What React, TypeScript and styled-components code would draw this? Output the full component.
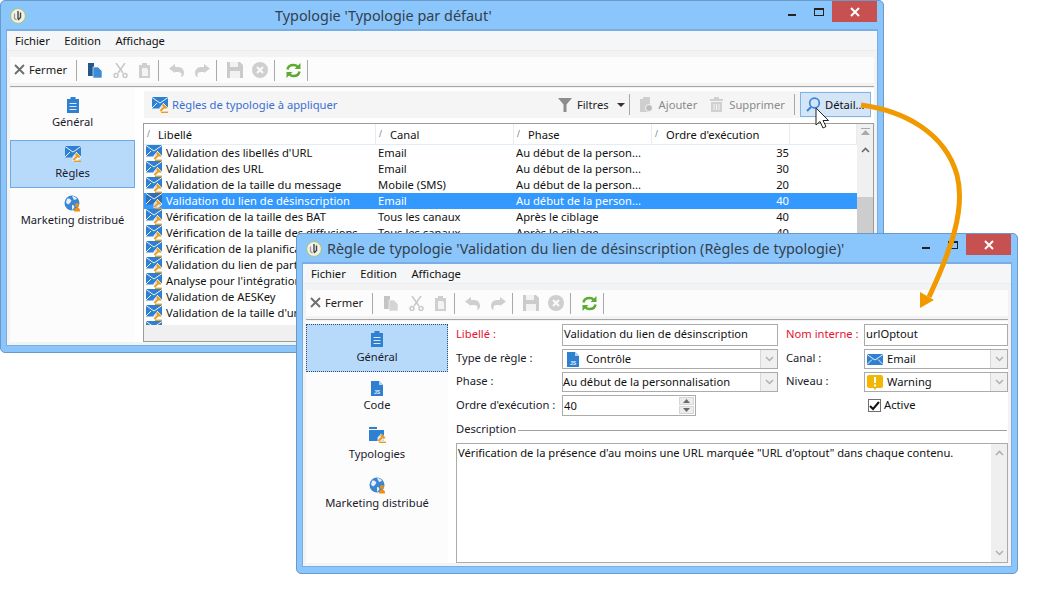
import React from "react";
import styled, { createGlobalStyle } from "styled-components";

const GlobalStyle = createGlobalStyle`
  html, body {
    margin: 0;
    padding: 0;
    background: #fff;
  }
`;

const Desktop = styled.div`
  position: relative;
  width: 1063px;
  height: 591px;
  overflow: hidden;
  background: #fff;
  font-family: "Noto Sans", "Open Sans", sans-serif;
  font-size: 11.2px;
  color: #111;
`;

const Win = styled.div<{ $x: number; $y: number; $w: number; $h: number }>`
  position: absolute;
  left: ${(p) => p.$x}px;
  top: ${(p) => p.$y}px;
  width: ${(p) => p.$w}px;
  height: ${(p) => p.$h}px;
  box-sizing: border-box;
  display: flex;
  flex-direction: column;
  padding: 0 6px 7px 6px;
  background: #8ac5fb;
  border: 1px solid #6b9ac8;
  border-radius: 5px;
`;

const TitleBar = styled.div<{ $left: number }>`
  position: relative;
  flex: 0 0 29px;
  display: flex;
  align-items: center;
  box-sizing: border-box;
  padding-left: ${(p) => p.$left}px;
  font-size: 14.4px;
  color: #333f4c;
  white-space: nowrap;
`;

const AppBadge = styled.div`
  position: absolute;
  left: 3px;
  top: 7px;
  width: 16px;
  height: 16px;
`;

const Controls = styled.div`
  position: absolute;
  right: 0;
  top: 0;
  display: flex;
  align-items: flex-start;
`;

const CtrlBtn = styled.div<{ $pt?: number }>`
  width: 27px;
  height: 21px;
  box-sizing: border-box;
  padding-top: ${(p) => p.$pt ?? 0}px;
  display: flex;
  align-items: center;
  justify-content: center;
`;

const CloseBtn = styled(CtrlBtn)`
  width: 45px;
  background: #c75050;
`;

const Client = styled.div`
  flex: 1;
  min-height: 0;
  display: flex;
  flex-direction: column;
  background: #f3f3f3;
  border-top: 1px solid #7aaee2;
  box-shadow: 0 0 0 1px #7aaee2;
`;

const MenuBar = styled.div`
  flex: 0 0 19px;
  display: flex;
  align-items: center;
  gap: 14.5px;
  padding-left: 8px;
  background: #f5f6f7;
  border-bottom: 1px solid #ececec;
`;

const ToolBar = styled.div`
  flex: 0 0 26px;
  margin: 6px 3px 0;
  display: flex;
  align-items: center;
  background: #fcfcfc;
  line-height: 15px;
`;

const CloseTool = styled.div`
  box-sizing: border-box;
  width: 66px;
  display: flex;
  align-items: center;
  gap: 4px;
  padding-left: 4px;
  padding-bottom: 1px;
  color: #222;
`;

const ToolSep = styled.div`
  width: 1px;
  height: 21px;
  background: #a8a8a8;
`;

const ToolGroup = styled.div<{ $gap?: number; $pl?: number; $pr?: number }>`
  display: flex;
  align-items: center;
  gap: ${(p) => p.$gap ?? 9}px;
  padding: 0 ${(p) => p.$pr ?? 6}px 0 ${(p) => p.$pl ?? 10}px;
`;

const Rule = styled.div`
  flex: 0 0 1px;
  margin: 3px 3px 0;
  background: #a6a6a6;
`;

const Body = styled.div`
  flex: 1;
  min-height: 0;
  display: flex;
  margin: 1px 3px 3px;
  background: #fff;
`;

const Side = styled.div<{ $w: number; $pt: number }>`
  flex: 0 0 ${(p) => p.$w}px;
  box-sizing: border-box;
  background: #fcfcfc;
  padding-top: ${(p) => p.$pt}px;
  display: flex;
  flex-direction: column;
`;

const SideItem = styled.div<{ $sel?: boolean; $dotted?: boolean; $h: number; $pt: number; $gap?: number }>`
  flex: 0 0 ${(p) => p.$h}px;
  box-sizing: border-box;
  display: flex;
  flex-direction: column;
  align-items: center;
  padding-top: ${(p) => p.$pt}px;
  gap: ${(p) => p.$gap ?? 0}px;
  line-height: 16px;
  white-space: nowrap;
  color: #1a1a2a;
  ${(p) => p.$sel && "background: #b8dafa;"}
  ${(p) => p.$sel && (p.$dotted ? "border: 1px dotted #2a4f7a;" : "border: 1px solid #6eaae6;")}
`;

const SideIcon = styled.div`
  height: 18px;
  display: flex;
  align-items: center;
`;

const Main = styled.div`
  flex: 1;
  min-width: 0;
  display: flex;
  flex-direction: column;
  padding: 3px 2px 0 8px;
`;

const Header = styled.div`
  flex: 0 0 27px;
  margin: 0 1px 5px 1px;
  display: flex;
  align-items: center;
  background: #f5f5f5;
  padding-left: 8px;
`;

const HeaderTitle = styled.div`
  display: flex;
  align-items: center;
  gap: 4px;
  color: #3a6fd0;
`;

const HeaderActions = styled.div`
  margin-left: auto;
  display: flex;
  align-items: center;
  height: 100%;
`;

const ActionBtn = styled.div<{ $off?: boolean; $pl?: number; $pr: number; $gap?: number }>`
  display: flex;
  align-items: center;
  gap: ${(p) => p.$gap ?? 6}px;
  padding: 0 ${(p) => p.$pr}px 0 ${(p) => p.$pl ?? 0}px;
  color: ${(p) => (p.$off ? "#8a8a8a" : "#222")};
`;

const CaretSlot = styled.span`
  margin-left: 3px;
  display: flex;
`;

const DetailBtn = styled.div`
  box-sizing: border-box;
  height: 25px;
  width: 71px;
  margin-left: 5px;
  display: flex;
  align-items: center;
  gap: 4px;
  padding-left: 5px;
  background: #d3e5f7;
  border: 1px solid #7eb4ea;
`;

const HeadSep = styled.div`
  width: 1px;
  height: 21px;
  background: #a8a8a8;
`;

const Table = styled.div`
  flex: 1;
  min-height: 0;
  display: flex;
  flex-direction: column;
  margin-right: -2px;
  border: 1px solid #9c9c9c;
  background: #f0f0f0;
  overflow: hidden;
`;

const ListArea = styled.div`
  height: 201px;
  display: flex;
  background: #fff;
`;

const ListCols = styled.div`
  width: 713px;
  overflow: hidden;
`;

const HeadRow = styled.div`
  display: grid;
  grid-template-columns: 232px 138px 138px 138px 67px;
  height: 21px;
  border-bottom: 1px solid #e3edf8;
  box-sizing: border-box;
`;

const HeadCell = styled.div`
  display: flex;
  align-items: center;
  gap: 6px;
  padding-left: 3px;
  border-right: 1px solid #e3edf8;
`;

const SortMark = styled.span`
  width: 5px;
  font-size: 8px;
  color: #777;
  line-height: 1;
`;

const Row = styled.div<{ $sel?: boolean }>`
  display: grid;
  grid-template-columns: 232px 138px 138px 138px 67px;
  height: 16px;
  align-items: center;
  white-space: nowrap;
  line-height: 15px;
  color: ${(p) => (p.$sel ? "#fff" : "#111")};
  background: ${(p) => (p.$sel ? "#3399ff" : "transparent")};
`;

const LabelCell = styled.div`
  display: flex;
  align-items: center;
  gap: 4px;
  padding-left: 2px;
  overflow: hidden;
`;

const LabelText = styled.span`
  padding-bottom: 1px;
`;

const TextCell = styled.div`
  padding: 0 0 1px 2px;
  overflow: hidden;
`;

const NumCell = styled.div`
  text-align: right;
  padding: 0 1px 1px 0;
`;

const VScroll = styled.div`
  flex: 0 0 16px;
  display: flex;
  flex-direction: column;
  align-items: center;
  background: #f0f0f0;
  padding-top: 4px;
  gap: 12px;
`;

const Thumb = styled.div`
  width: 16px;
  height: 50px;
  margin-top: 32px;
  background: #cdcdcd;
`;

const Form = styled.div`
  flex: 1;
  min-width: 0;
  display: flex;
  flex-direction: column;
  padding: 3px 0 0 8px;
  background: #fff;
`;

const FieldGrid = styled.div`
  display: grid;
  grid-template-columns: 106px 216px 8px 78px 144px;
  grid-template-rows: 22px 20px 20px 21px;
  row-gap: 3px;
  align-items: center;
`;

const Label = styled.div<{ $req?: boolean }>`
  color: ${(p) => (p.$req ? "#e8112d" : "#1a1a2a")};
  white-space: nowrap;
  line-height: 14px;
  padding-bottom: 2px;
`;

const Field = styled.div`
  box-sizing: border-box;
  height: 100%;
  display: flex;
  align-items: center;
  padding: 0 0 2px 1px;
  background: #fff;
  border: 1px solid #ababab;
  white-space: nowrap;
  overflow: hidden;
  line-height: 14px;
`;

const SelectBox = styled(Field)<{ $pl?: number; $gap?: number }>`
  padding: 0 0 0 ${(p) => p.$pl ?? 2}px;
  gap: ${(p) => p.$gap ?? 4}px;
`;

const Chevron = styled.div`
  margin-left: auto;
  flex: 0 0 16px;
  height: 100%;
  display: flex;
  align-items: center;
  justify-content: center;
  background: #f0f0f0;
  border-left: 1px solid #d8d8d8;
`;

const SpinField = styled(Field)`
  width: 134px;
  padding: 0 0 0 1px;
`;

const Spin = styled.div`
  margin-left: auto;
  width: 16px;
  height: 100%;
  display: flex;
  flex-direction: column;
  padding: 1px 1px 1px 0;
  box-sizing: border-box;
  gap: 1px;
`;

const SpinPart = styled.div`
  flex: 1;
  display: flex;
  align-items: center;
  justify-content: center;
  background: #ececec;
  border: 1px solid #d6d6d6;
`;

const CheckRow = styled.div`
  display: flex;
  align-items: center;
  gap: 3px;
  padding-left: 4px;
`;

const CheckText = styled.span`
  line-height: 14px;
  padding-bottom: 2px;
`;

const CheckBox = styled.div`
  box-sizing: border-box;
  width: 13px;
  height: 13px;
  display: flex;
  align-items: center;
  justify-content: center;
  border: 1px solid #6f6f6f;
  background: #fff;
`;

const LegendRow = styled.div`
  display: flex;
  align-items: center;
  gap: 2px;
  margin-top: 6px;
  height: 16px;
  color: #1a1a2a;
`;

const LegendText = styled.span`
  line-height: 14px;
  padding-bottom: 2px;
`;

const LegendLine = styled.div`
  flex: 1;
  height: 1px;
  margin-right: 1px;
  background: #a0a0a0;
`;

const DescBox = styled.div`
  position: relative;
  flex: 1;
  margin-top: 5px;
  box-sizing: border-box;
  padding: 1px 1px;
  border: 1px solid #ababab;
  background: #fff;
`;

const DescScroll = styled.div`
  position: absolute;
  right: 0;
  top: 0;
  bottom: 0;
  width: 16px;
  background: #efefef;
  display: flex;
  flex-direction: column;
  align-items: center;
  justify-content: space-between;
  padding: 6px 0;
  box-sizing: border-box;
`;

const Overlay = styled.svg`
  position: absolute;
  left: 0;
  top: 0;
  pointer-events: none;
`;

// --- icons ---

const Logo = () => (
  <svg width="16" height="16" viewBox="0 0 16 16">
    <circle cx="8" cy="8" r="7.400" fill="#f1f1ea" stroke="#a3c56c" />
    <path d="M4.500 5.500v5l2 1.500" fill="none" stroke="#9a9a9a" strokeWidth="1.300" />
    <path d="M8 3v8M10.500 4.500v5L8 12" fill="none" stroke="#444" strokeWidth="1.400" />
  </svg>
);

const MinIcon = () => (
  <svg width="8" height="2" viewBox="0 0 8 2"><rect width="8" height="2" fill="#222" /></svg>
);

const MaxIcon = () => (
  <svg width="10" height="8" viewBox="0 0 10 8">
    <rect x="0.500" y="1" width="9" height="6.500" fill="none" stroke="#222" />
    <rect width="10" height="2" fill="#222" />
  </svg>
);

const XWhite = () => (
  <svg width="10" height="10" viewBox="0 0 10 10">
    <path d="M1 1l8 8M9 1l-8 8" stroke="#fff" strokeWidth="2" />
  </svg>
);

const Cross = () => (
  <svg width="11" height="11" viewBox="0 0 11 11">
    <path d="M1 1l9 9M10 1L1 10" stroke="#6e6e6e" strokeWidth="1.900" />
  </svg>
);

const CopyIcon = ({ on }: { on?: boolean }) => (
  <svg width="15" height="15" viewBox="0 0 15 15">
    <path d="M0 0h6v13H0z" fill={on ? "#23568f" : "#c4c4c4"} />
    <path d="M5 4h5l4 4v7H5z" fill={on ? "#3d8ad6" : "#d4d4d4"} stroke="#fcfcfc" strokeWidth=".6" />
  </svg>
);

const CutIcon = () => (
  <svg width="15" height="15" viewBox="0 0 15 15" fill="none" stroke="#c8c8c8" strokeWidth="1.500">
    <path d="M3 0l7 10M12 0L5 10" />
    <circle cx="3" cy="12.500" r="2" />
    <circle cx="12" cy="12.500" r="2" />
  </svg>
);

const PasteIcon = () => (
  <svg width="13" height="15" viewBox="0 0 13 15">
    <path d="M1 2h3V0h5v2h3v13H1z" fill="#cfcfcf" />
    <path d="M4 5h5l1 2v6H4z" fill="#f4f4f4" />
  </svg>
);

const UndoIcon = ({ flip }: { flip?: boolean }) => (
  <svg width="16" height="13" viewBox="0 0 16 13" style={flip ? { transform: "scaleX(-1)" } : undefined}>
    <path d="M0 4.500L6 0v3h3c4 0 6 3 6 6s-2 4-3 4c1-2 1-5-3-5H6v1z" fill="#cfcfcf" />
  </svg>
);

const SaveIcon = () => (
  <svg width="16" height="16" viewBox="0 0 16 16">
    <path d="M0 0h13l3 3v13H0z" fill="#cbcbcb" />
    <path d="M3 0h8v5H3z" fill="#f2f2f2" />
    <path d="M3 9h10v7H3z" fill="#f2f2f2" />
  </svg>
);

const CancelIcon = () => (
  <svg width="16" height="16" viewBox="0 0 16 16">
    <circle cx="8" cy="8" r="8" fill="#cfcfcf" />
    <path d="M5 5l6 6M11 5l-6 6" stroke="#fbfbfb" strokeWidth="2" />
  </svg>
);

const RefreshIcon = () => (
  <svg width="15" height="15" viewBox="0 0 15 15" fill="none">
    <path d="M1.500 6.500C2 3.500 4.500 2 7.500 2c1.800 0 3.200.7 4.200 1.800" stroke="#5aab2e" strokeWidth="2.400" />
    <path d="M14.500 0v6h-6z" fill="#5aab2e" />
    <path d="M13.500 8.500C13 11.500 10.500 13 7.500 13c-1.800 0-3.200-.7-4.200-1.800" stroke="#5aab2e" strokeWidth="2.400" />
    <path d="M.5 15V9h6z" fill="#5aab2e" />
  </svg>
);

const ClipboardIcon = () => (
  <svg width="12" height="16" viewBox="0 0 12 16">
    <path d="M0 2h3.500V0h5v2H12v14H0z" fill="#2f80d0" />
    <path d="M2.500 6.500h7M2.500 9.500h7M2.500 12.500h7" stroke="#d8e9fa" />
  </svg>
);

const Gavel = ({ x, y }: { x: number; y: number }) => (
  <g transform={`translate(${x} ${y})`}>
    <path d="M3.500-1L9 3.500 5 7.500H0V3z" fill="#fff" opacity=".8" />
    <path d="M4-.5L8 3 6.500 4.500l-4-3.500z" fill="#ee9a1c" />
    <path d="M5 2.500L.8 6.500" stroke="#ee9a1c" strokeWidth="1.800" fill="none" />
    <path d="M1.500 7.800h7" stroke="#ee9a1c" strokeWidth="1.400" />
  </g>
);

const MailRule = ({ dark }: { dark?: boolean }) => (
  <svg width="16" height="16" viewBox="0 0 16 16">
    <rect width="16" height="11.500" fill={dark ? "#2d6fbb" : "#2f80d0"} />
    <path d="M0 .5l8 5.500 8-5.500M0 11l5-5M16 11l-5-5" stroke="#e8f2fb" strokeWidth="1" fill="none" />
    <Gavel x={7.500} y={7.500} />
  </svg>
);

const MailIcon = () => (
  <svg width="16" height="11" viewBox="0 0 16 11">
    <rect width="16" height="11" fill="#2f80d0" />
    <path d="M0 .5l8 5.500 8-5.500M0 10.500l5-5M16 10.500l-5-5" stroke="#e8f2fb" fill="none" />
  </svg>
);

const GlobeIcon = () => (
  <svg width="17" height="17" viewBox="0 0 17 17">
    <circle cx="8" cy="8" r="7.500" fill="#3b86d2" />
    <path d="M3 4c2-1 3 0 4 1S6 8 5 9 2 8 2 7zM8 1c2 0 4 1 5 3l-3 1zM8 10c2 0 3 1 2 3l-2 2z" fill="#e6f0fa" />
    <circle cx="13" cy="10" r="2" fill="#ee8f12" />
    <path d="M10 15.500c0-2 1.500-3 3-3s3 1 3 3v1h-6z" fill="#ee8f12" />
  </svg>
);

const JsFile = () => (
  <svg width="12" height="15" viewBox="0 0 12 15">
    <path d="M0 0h8l4 4v11H0z" fill="#2f80d0" />
    <path d="M8 0l4 4H8z" fill="#b8d6f2" />
    <text x="3" y="12.500" fontSize="5" fontWeight="700" fill="#e8f2fb" fontFamily="Liberation Sans">JS</text>
  </svg>
);

const FolderRule = () => (
  <svg width="17" height="16" viewBox="0 0 17 16">
    <path d="M0 0h8v2H0z" fill="#2f80d0" />
    <path d="M0 3h15v11H0z" fill="#2f80d0" />
    <Gavel x={8.500} y={7.500} />
  </svg>
);

const FunnelIcon = () => (
  <svg width="14" height="14" viewBox="0 0 14 14">
    <path d="M0 0h14L8.500 6.500V14h-3V6.500z" fill="#8c8c8c" />
  </svg>
);

const Caret = () => (
  <svg width="8" height="4" viewBox="0 0 8 4"><path d="M0 0h8L4 4z" fill="#333" /></svg>
);

const AddDoc = () => (
  <svg width="13" height="15" viewBox="0 0 13 15">
    <path d="M0 2h3V0h7v15H0z" fill="#cfcfcf" />
    <circle cx="9" cy="11" r="3.500" fill="#bdbdbd" stroke="#f5f5f5" />
  </svg>
);

const TrashIcon = () => (
  <svg width="13" height="15" viewBox="0 0 13 15">
    <path d="M0 2h4V0h5v2h4v2H0zM1 5h11v10H1z" fill="#d0d0d0" />
    <path d="M4 7v6M6.500 7v6M9 7v6" stroke="#f5f5f5" />
  </svg>
);

const LoupeIcon = () => (
  <svg width="15" height="15" viewBox="0 0 15 15" fill="none">
    <circle cx="8.500" cy="6" r="4.800" stroke="#3a86d6" strokeWidth="1.700" />
    <path d="M5 10l-4 4" stroke="#3a86d6" strokeWidth="2.200" />
  </svg>
);

const ChevDown = () => (
  <svg width="9" height="6" viewBox="0 0 9 6" fill="none"><path d="M1 1l3.500 3.500L8 1" stroke="#b0b0b0" strokeWidth="1.500" /></svg>
);

const ChevUp = ({ color = "#6b6b6b" }: { color?: string }) => (
  <svg width="9" height="6" viewBox="0 0 9 6" fill="none"><path d="M1 5l3.500-3.500L8 5" stroke={color} strokeWidth="1.600" /></svg>
);

const TopArrow = () => (
  <svg width="9" height="7" viewBox="0 0 9 7"><path d="M0 0h9v1H0zM4.500 2L9 7H0z" fill="#a9a9a9" /></svg>
);

const Tri = ({ down }: { down?: boolean }) => (
  <svg width="7" height="4" viewBox="0 0 7 4"><path d={down ? "M0 0h7L3.500 4z" : "M0 4h7L3.500 0z"} fill="#6a6a6a" /></svg>
);

const WarnIcon = () => (
  <svg width="16" height="15" viewBox="0 0 16 15">
    <path d="M2 0h12a2 2 0 012 2v9a2 2 0 01-2 2H9.500L8 15l-1.500-2H2a2 2 0 01-2-2V2a2 2 0 012-2z" fill="#f2b705" />
    <path d="M7 2h2v6H7zM7 9.500h2v2H7z" fill="#fff" />
  </svg>
);

const CheckMark = () => (
  <svg width="11" height="10" viewBox="0 0 11 10" fill="none"><path d="M1 5l3 3 6-7" stroke="#111" strokeWidth="2" /></svg>
);

// --- data ---

const rows = [
  ["Validation des libellés d'URL", "Email", "Au début de la person...", "35"],
  ["Validation des URL", "Email", "Au début de la person...", "30"],
  ["Validation de la taille du message", "Mobile (SMS)", "Au début de la person...", "20"],
  ["Validation du lien de désinscription", "Email", "Au début de la person...", "40"],
  ["Vérification de la taille des BAT", "Tous les canaux", "Après le ciblage", "40"],
  ["Vérification de la taille des diffusions", "Tous les canaux", "Après le ciblage", "40"],
  ["Vérification de la planification", "Tous les canaux", "Après le ciblage", "40"],
  ["Validation du lien de partage", "Email", "Au début de la person...", "40"],
  ["Analyse pour l'intégration", "Email", "Au début de la person...", "40"],
  ["Validation de AESKey", "Email", "Au début de la person...", "40"],
  ["Validation de la taille d'un message", "Email", "Au début de la person...", "40"],
  ["Validation des libellés", "Email", "Au début de la person...", "40"],
];

const Tools = ({ copyOn }: { copyOn?: boolean }) => (
  <>
    <CloseTool><Cross /> Fermer</CloseTool>
    <ToolSep />
    <ToolGroup $gap={10} $pl={11} $pr={7}><CopyIcon on={copyOn} /><CutIcon /><PasteIcon /></ToolGroup>
    <ToolSep />
    <ToolGroup><UndoIcon /><UndoIcon flip /></ToolGroup>
    <ToolSep />
    <ToolGroup><SaveIcon /><CancelIcon /></ToolGroup>
    <ToolSep />
    <ToolGroup $pl={11}><RefreshIcon /></ToolGroup>
    <ToolSep />
  </>
);

const Menu = () => (
  <MenuBar>
    <span>Fichier</span>
    <span>Edition</span>
    <span>Affichage</span>
  </MenuBar>
);

const WinControls = () => (
  <Controls>
    <CtrlBtn $pt={6}><MinIcon /></CtrlBtn>
    <CtrlBtn><MaxIcon /></CtrlBtn>
    <CloseBtn><XWhite /></CloseBtn>
  </Controls>
);

export default function App() {
  return (
    <Desktop>
      <GlobalStyle />

      <Win $x={0} $y={0} $w={884} $h={353}>
        <TitleBar $left={268}>
          <AppBadge><Logo /></AppBadge>
          Typologie 'Typologie par défaut'
          <WinControls />
        </TitleBar>
        <Client>
          <Menu />
          <ToolBar><Tools copyOn /></ToolBar>
          <Rule />
          <Body>
            <Side $w={125} $pt={4}>
              <SideItem $h={48} $pt={4}>
                <SideIcon><ClipboardIcon /></SideIcon>
                Général
              </SideItem>
              <SideItem $h={48} $pt={4} $gap={2} $sel>
                <SideIcon><MailRule /></SideIcon>
                Règles
              </SideItem>
              <SideItem $h={48} $pt={6}>
                <SideIcon><GlobeIcon /></SideIcon>
                Marketing distribué
              </SideItem>
            </Side>
            <Main>
              <Header>
                <HeaderTitle><MailRule /> Règles de typologie à appliquer</HeaderTitle>
                <HeaderActions>
                  <ActionBtn $pr={4} $gap={5}>
                    <FunnelIcon /> Filtres <CaretSlot><Caret /></CaretSlot>
                  </ActionBtn>
                  <HeadSep />
                  <ActionBtn $off $pl={10} $pr={13}><AddDoc /> Ajouter</ActionBtn>
                  <ActionBtn $off $pr={9}><TrashIcon /> Supprimer</ActionBtn>
                  <HeadSep />
                  <DetailBtn><LoupeIcon /> Détail...</DetailBtn>
                </HeaderActions>
              </Header>
              <Table>
                <ListArea>
                  <ListCols>
                    <HeadRow>
                      <HeadCell><SortMark>/</SortMark>Libellé</HeadCell>
                      <HeadCell><SortMark>/</SortMark>Canal</HeadCell>
                      <HeadCell><SortMark>/</SortMark>Phase</HeadCell>
                      <HeadCell><SortMark>/</SortMark>Ordre d'exécution</HeadCell>
                      <HeadCell />
                    </HeadRow>
                    {rows.map((r, i) => (
                      <Row key={i} $sel={i === 3}>
                        <LabelCell><MailRule dark={i === 3} /><LabelText>{r[0]}</LabelText></LabelCell>
                        <TextCell>{r[1]}</TextCell>
                        <TextCell>{r[2]}</TextCell>
                        <NumCell>{r[3]}</NumCell>
                      </Row>
                    ))}
                  </ListCols>
                  <VScroll>
                    <TopArrow />
                    <ChevUp />
                    <Thumb />
                  </VScroll>
                </ListArea>
              </Table>
            </Main>
          </Body>
        </Client>
      </Win>

      <Win $x={296} $y={233} $w={722} $h={341}>
        <TitleBar $left={24}>
          <AppBadge><Logo /></AppBadge>
          Règle de typologie 'Validation du lien de désinscription (Règles de typologie)'
          <WinControls />
        </TitleBar>
        <Client>
          <Menu />
          <ToolBar><Tools /></ToolBar>
          <Rule />
          <Body>
            <Side $w={142} $pt={3}>
              <SideItem $h={48} $pt={5} $gap={1} $sel $dotted>
                <SideIcon><ClipboardIcon /></SideIcon>
                Général
              </SideItem>
              <SideItem $h={48} $pt={7}>
                <SideIcon><JsFile /></SideIcon>
                Code
              </SideItem>
              <SideItem $h={49} $pt={6} $gap={2}>
                <SideIcon><FolderRule /></SideIcon>
                Typologies
              </SideItem>
              <SideItem $h={49} $pt={7} $gap={1}>
                <SideIcon><GlobeIcon /></SideIcon>
                Marketing distribué
              </SideItem>
            </Side>
            <Form>
              <FieldGrid>
                <Label $req>Libellé :</Label>
                <Field>Validation du lien de désinscription</Field>
                <span />
                <Label $req>Nom interne :</Label>
                <Field>urlOptout</Field>

                <Label>Type de règle :</Label>
                <SelectBox $pl={4} $gap={7}><JsFile /> Contrôle<Chevron><ChevDown /></Chevron></SelectBox>
                <span />
                <Label>Canal :</Label>
                <SelectBox><MailIcon /> Email<Chevron><ChevDown /></Chevron></SelectBox>

                <Label>Phase :</Label>
                <SelectBox $pl={0}>Au début de la personnalisation<Chevron><ChevDown /></Chevron></SelectBox>
                <span />
                <Label>Niveau :</Label>
                <SelectBox><WarnIcon /> Warning<Chevron><ChevDown /></Chevron></SelectBox>

                <Label>Ordre d'exécution :</Label>
                <SpinField>
                  40
                  <Spin>
                    <SpinPart><Tri /></SpinPart>
                    <SpinPart><Tri down /></SpinPart>
                  </Spin>
                </SpinField>
                <span />
                <span />
                <CheckRow><CheckBox><CheckMark /></CheckBox><CheckText>Active</CheckText></CheckRow>
              </FieldGrid>
              <LegendRow><LegendText>Description</LegendText><LegendLine /></LegendRow>
              <DescBox>
                Vérification de la présence d'au moins une URL marquée "URL d'optout" dans chaque contenu.
                <DescScroll>
                  <ChevUp color="#b0b0b0" />
                  <ChevDown />
                </DescScroll>
              </DescBox>
            </Form>
          </Body>
        </Client>
      </Win>

      <Overlay width="1063" height="591" viewBox="0 0 1063 591">
        <path d="M861 105C905 111 945 133 957 175C966 210 950 252 929 297" fill="none" stroke="#f09a00" strokeWidth="5" />
        <path d="M920 308L920 292L934 300z" fill="#f09a00" />
        <path d="M816 108v17l4-3.500 3 6.500 3-1.500-3-6h5.500z" fill="#fff" stroke="#222" strokeWidth="1" />
      </Overlay>
    </Desktop>
  );
}
